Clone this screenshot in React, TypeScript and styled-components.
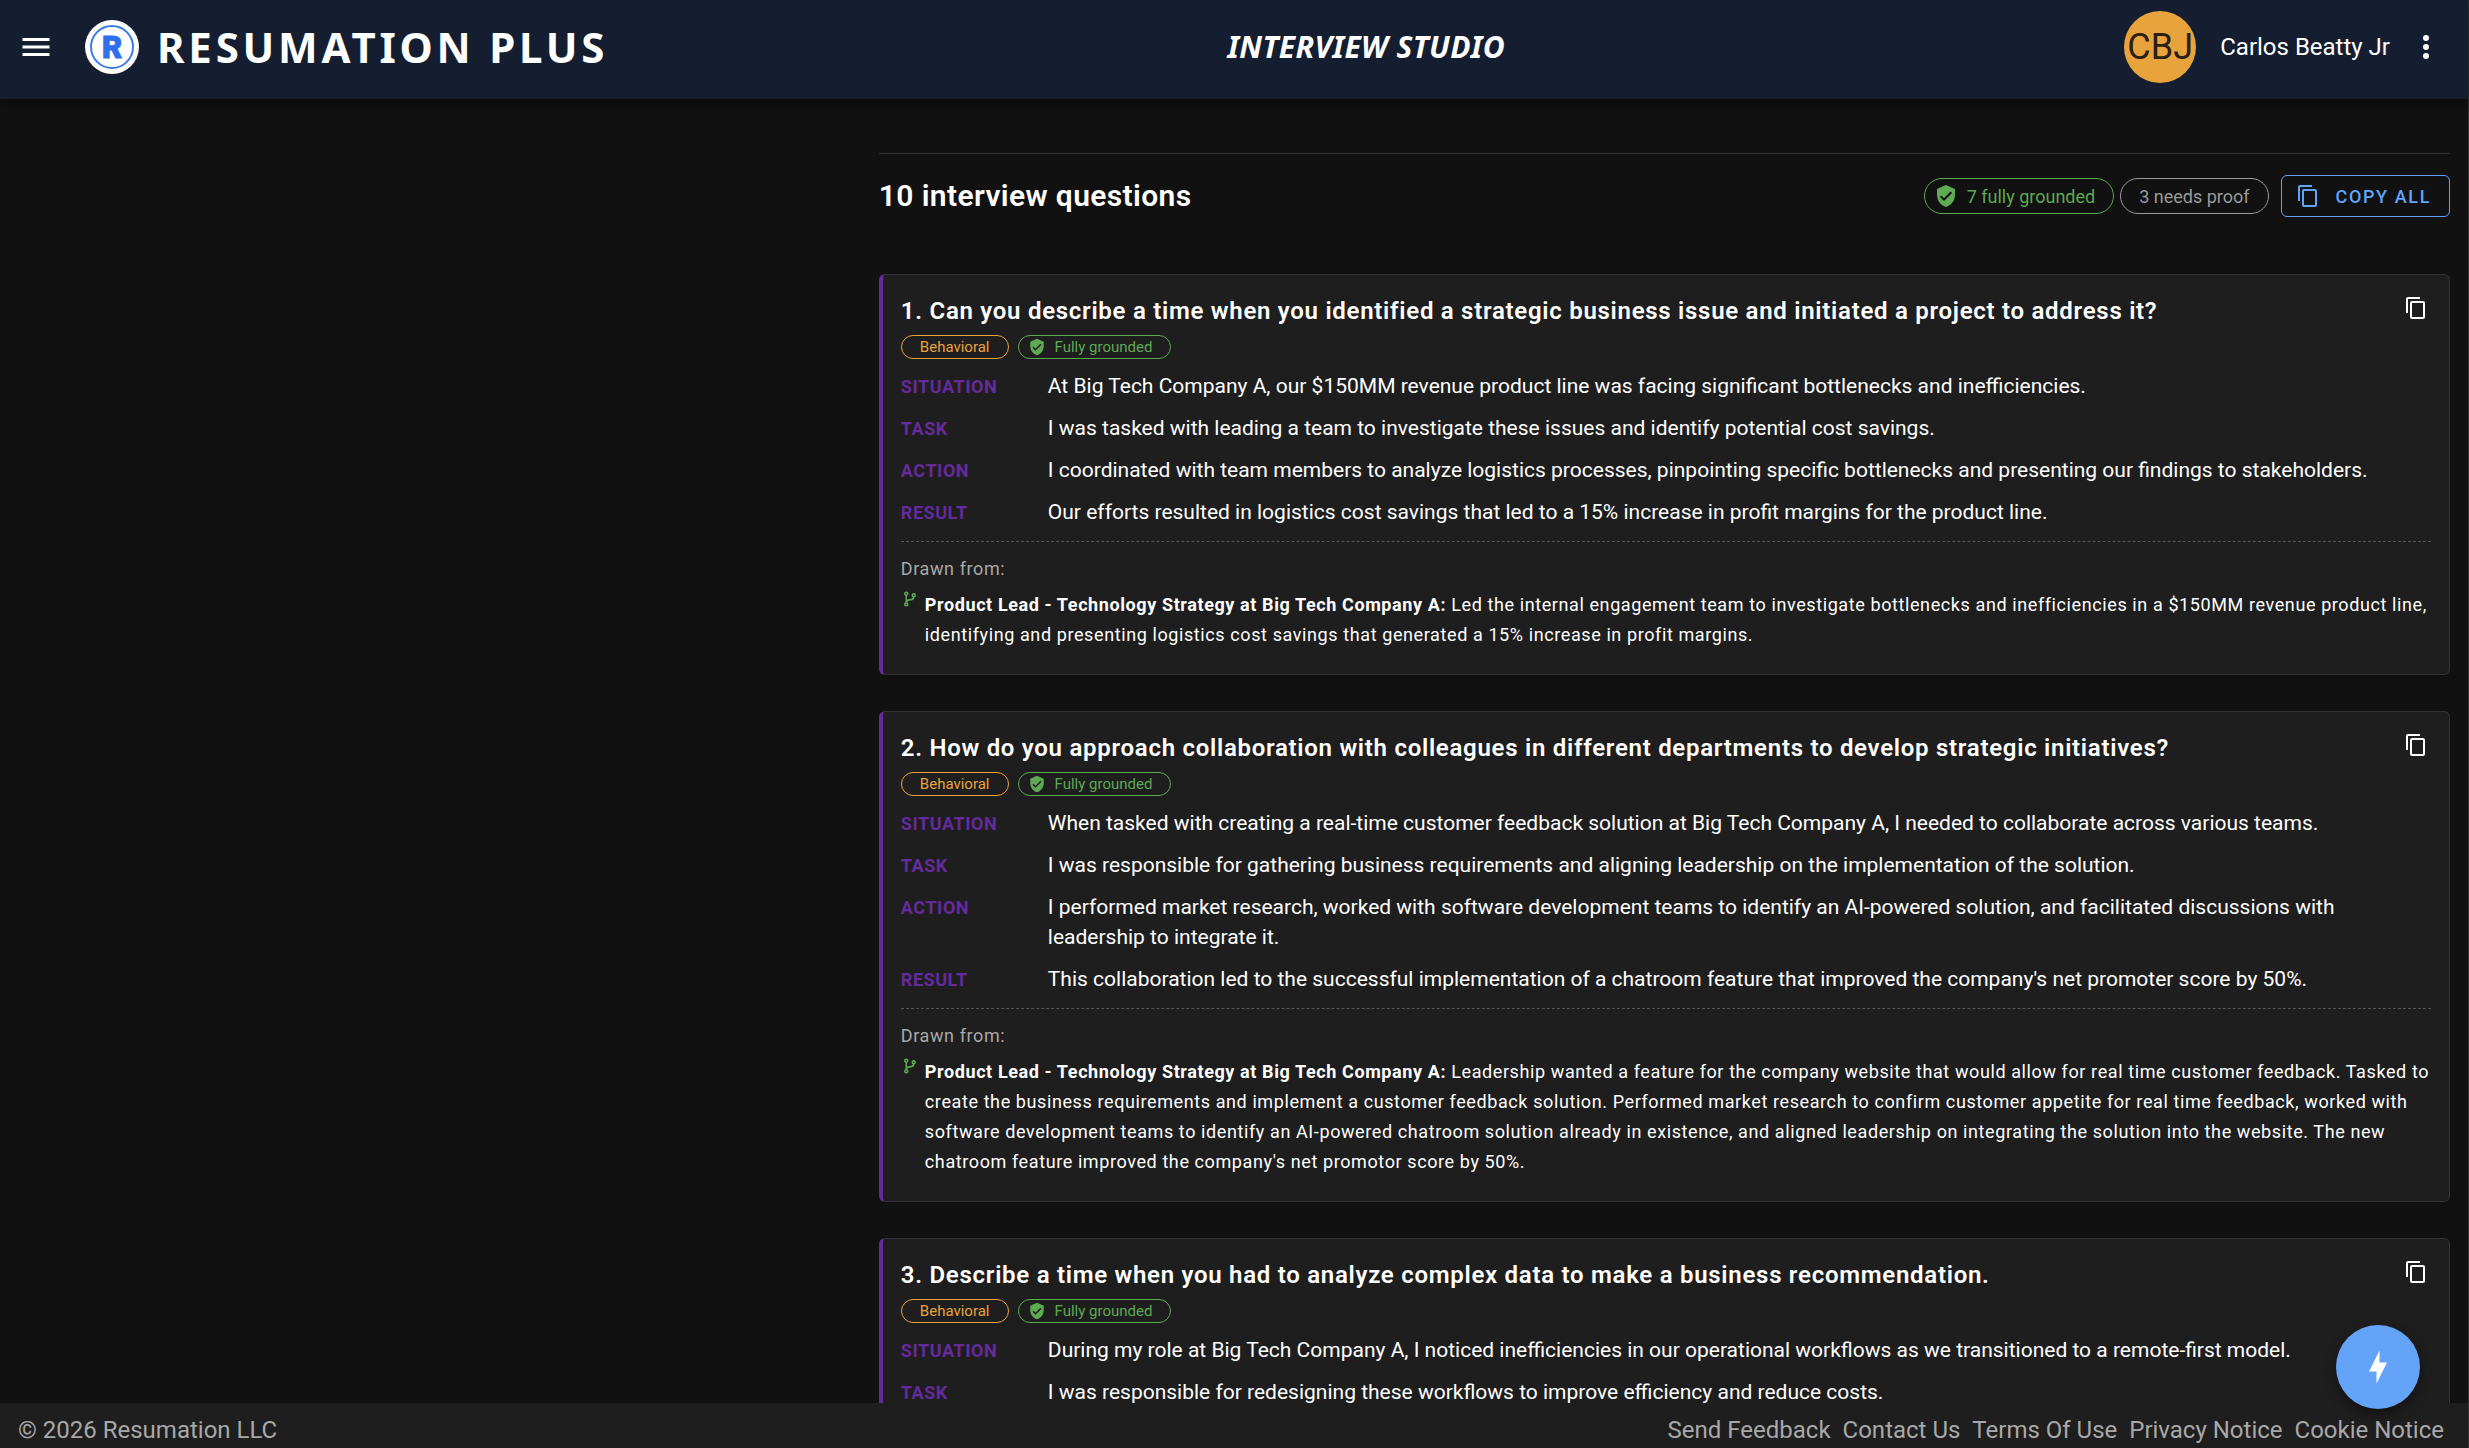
import React from 'react';
import styled, { createGlobalStyle } from 'styled-components';

const color = {
  page: '#111111',
  surface: '#1e1e1e',
  header: '#141e30',
  line: '#333333',
  purple: '#652a9c',
  green: '#5fa854',
  amber: '#e8a33d',
  blue: '#60a5fa',
  muted: '#a8a8a8',
};

const GlobalStyle = createGlobalStyle`
  *, *::before, *::after { box-sizing: border-box; }
  body {
    margin: 0;
    background: ${color.page};
    color: #fff;
    font-family: Roboto, sans-serif;
    font-size: 24px;
  }
  h1, h2, h3, p, dl, dd, dt, ul { margin: 0; padding: 0; font-weight: inherit; }
  button { font-family: inherit; cursor: pointer; }
`;

const icons = {
  menu: 'M3,6H21V8H3V6M3,11H21V13H3V11M3,16H21V18H3V16Z',
  dots: 'M12,16A2,2 0 0,1 14,18A2,2 0 0,1 12,20A2,2 0 0,1 10,18A2,2 0 0,1 12,16M12,10A2,2 0 0,1 14,12A2,2 0 0,1 12,14A2,2 0 0,1 10,12A2,2 0 0,1 12,10M12,4A2,2 0 0,1 14,6A2,2 0 0,1 12,8A2,2 0 0,1 10,6A2,2 0 0,1 12,4Z',
  copy: 'M19,21H8V7H19M19,5H8A2,2 0 0,0 6,7V21A2,2 0 0,0 8,23H19A2,2 0 0,0 21,21V7A2,2 0 0,0 19,5M16,1H4A2,2 0 0,0 2,3V17H4V3H16V1Z',
  shield: 'M10,17L6,13L7.41,11.59L10,14.17L16.59,7.58L18,9M12,1L3,5V11C3,16.55 6.84,21.74 12,23C17.16,21.74 21,16.55 21,11V5L12,1Z',
  branch: 'M13,14C9.64,14 8.54,15.35 8.18,16.24C9.25,16.7 10,17.76 10,19A3,3 0 0,1 7,22A3,3 0 0,1 4,19C4,17.69 4.83,16.58 6,16.17V7.83C4.83,7.42 4,6.31 4,5A3,3 0 0,1 7,2A3,3 0 0,1 10,5C10,6.31 9.17,7.42 8,7.83V13.12C8.88,12.47 10.16,12 12,12C14.67,12 15.56,10.66 15.85,9.77C14.77,9.32 14,8.25 14,7A3,3 0 0,1 17,4A3,3 0 0,1 20,7C20,8.34 19.12,9.5 17.91,9.86C17.65,11.29 16.68,14 13,14M7,18A1,1 0 0,0 6,19A1,1 0 0,0 7,20A1,1 0 0,0 8,19A1,1 0 0,0 7,18M7,4A1,1 0 0,0 6,5A1,1 0 0,0 7,6A1,1 0 0,0 8,5A1,1 0 0,0 7,4M17,6A1,1 0 0,0 16,7A1,1 0 0,0 17,8A1,1 0 0,0 18,7A1,1 0 0,0 17,6Z',
  bolt: 'M11 15H6L13 1V9H18L11 23V15Z',
};

const IconSvg = styled.svg<{ $size: number }>`
  display: block;
  flex: none;
  width: ${(p) => p.$size}px;
  height: ${(p) => p.$size}px;
  fill: currentColor;
`;

function Icon({ name, size = 24 }: { name: keyof typeof icons; size?: number }) {
  return (
    <IconSvg $size={size} viewBox="0 0 24 24" aria-hidden="true">
      <path d={icons[name]} />
    </IconSvg>
  );
}

const Shell = styled.div`
  display: flex;
  flex-direction: column;
  height: 100vh;
  border-right: 1px solid ${color.line};
`;

const Header = styled.header`
  z-index: 1;
  flex: none;
  display: flex;
  justify-content: space-between;
  align-items: center;
  height: 99px;
  padding: 0 24px 5px 18px;
  background: ${color.header};
  box-shadow: 0 3px 8px rgba(0, 0, 0, 0.5);
`;

const Brand = styled.div`
  display: flex;
  align-items: center;
`;

const BarButton = styled.button`
  display: flex;
  padding: 0;
  border: 0;
  background: none;
  color: #fff;
`;

const Logo = styled.svg`
  flex: none;
  width: 54px;
  height: 54px;
  margin: 0 18px 0 31px;
`;

const BrandName = styled.span`
  font-family: 'Noto Sans', sans-serif;
  font-size: 42px;
  font-weight: 700;
  line-height: 54px;
  letter-spacing: 0.09em;
  white-space: nowrap;
`;

const PageTitle = styled.h1`
  font-family: 'Noto Sans', sans-serif;
  font-size: 30px;
  font-weight: 700;
  font-style: italic;
  line-height: 36px;
  letter-spacing: 0.0125em;
  white-space: nowrap;
`;

const Account = styled.div`
  display: flex;
  align-items: center;
  justify-content: flex-end;
  white-space: nowrap;
`;

const Avatar = styled.span`
  display: flex;
  align-items: center;
  justify-content: center;
  width: 72px;
  height: 72px;
  margin-right: 24px;
  border-radius: 50%;
  background: ${color.amber};
  color: #2a2013;
  font-size: 36px;
`;

const UserName = styled.span`
  margin-right: 18px;
`;

const Main = styled.main`
  flex: 1;
  min-height: 0;
  display: grid;
  grid-template-columns: 21fr 40fr;
  column-gap: 36px;
  padding: 54px 18px 0;
  overflow-y: auto;
  scrollbar-width: none;
`;

const Results = styled.section`
  grid-column: 2;
  border-top: 1px solid ${color.line};
`;

const ResultsBar = styled.div`
  display: flex;
  align-items: center;
  justify-content: space-between;
  padding: 21px 0 57px;
`;

const ResultsTitle = styled.h2`
  font-size: 30px;
  font-weight: 600;
  line-height: 42px;
  letter-spacing: 0.0125em;
`;

const Summary = styled.div`
  display: flex;
  align-items: center;
  gap: 6px;
`;

const Chip = styled.span<{ $tone: string; $small?: boolean }>`
  display: inline-flex;
  align-items: center;
  gap: 9px;
  height: ${(p) => (p.$small ? 24 : 36)}px;
  padding: 0 18px;
  border: 1px solid ${(p) => p.$tone};
  border-radius: 18px;
  color: ${(p) => p.$tone};
  font-size: ${(p) => (p.$small ? 15 : 18)}px;
  white-space: nowrap;

  svg { margin-left: -9px; }
`;

const CopyAll = styled.button`
  display: flex;
  align-items: center;
  gap: 16px;
  height: 42px;
  margin-left: 6px;
  padding: 0 18px 0 14px;
  border: 1px solid ${color.blue};
  border-radius: 6px;
  background: none;
  color: ${color.blue};
  font-size: 18px;
  font-weight: 500;
  letter-spacing: 0.09em;
`;

const CardList = styled.div`
  display: flex;
  flex-direction: column;
  gap: 36px;
`;

const Card = styled.article`
  padding: 18px;
  border: 1px solid ${color.line};
  border-left: 4px solid ${color.purple};
  border-radius: 6px;
  background: ${color.surface};
`;

const CardHead = styled.div`
  display: flex;
  align-items: flex-start;
  justify-content: space-between;
`;

const Question = styled.h3`
  font-size: 24px;
  font-weight: 600;
  line-height: 36px;
  letter-spacing: 0.03em;
`;

const CopyButton = styled(BarButton)`
  justify-content: center;
  align-items: center;
  width: 30px;
  height: 30px;
`;

const Tags = styled.div`
  display: flex;
  gap: 9px;
  margin: 6px 0 12px;
`;

const Star = styled.dl`
  display: flex;
  flex-direction: column;
  gap: 12px;
`;

const StarRow = styled.div`
  display: grid;
  grid-template-columns: 135px 1fr;
  column-gap: 12px;
  align-items: baseline;
`;

const StarLabel = styled.dt`
  color: ${color.purple};
  font-size: 18px;
  font-weight: 700;
  line-height: 24px;
  letter-spacing: 0.03em;
`;

const StarText = styled.dd`
  font-size: 21px;
  line-height: 30px;
`;

const Sources = styled.div`
  margin-top: 14px;
  padding: 12px 0 6px;
  border-top: 1px dashed #555;
  font-size: 18px;
  line-height: 30px;
  letter-spacing: 0.0333em;
`;

const SourcesLabel = styled.p`
  color: ${color.muted};
`;

const Source = styled.div`
  display: flex;
  gap: 6px;
  margin-top: 6px;
  color: ${color.green};

  p { color: #fff; }
`;

const Fab = styled.button`
  position: fixed;
  right: 49px;
  bottom: 39px;
  z-index: 2;
  display: flex;
  align-items: center;
  justify-content: center;
  width: 84px;
  height: 84px;
  padding: 0;
  border: 0;
  border-radius: 50%;
  background: #64a4f8;
  color: #fff;
  box-shadow: 0 5px 12px rgba(0, 0, 0, 0.4);
`;

const Footer = styled.footer`
  flex: none;
  display: flex;
  justify-content: space-between;
  height: 45px;
  padding: 9px 24px 0 18px;
  background: ${color.surface};
  color: ${color.muted};
  line-height: 36px;
  white-space: nowrap;
`;

const FooterNav = styled.nav`
  display: flex;
  gap: 12px;

  a { color: inherit; text-decoration: none; }
`;

interface Answer {
  question: string;
  star: [string, string][];
  role?: string;
  evidence?: string;
}

const answers: Answer[] = [
  {
    question: 'Can you describe a time when you identified a strategic business issue and initiated a project to address it?',
    star: [
      ['SITUATION', 'At Big Tech Company A, our $150MM revenue product line was facing significant bottlenecks and inefficiencies.'],
      ['TASK', 'I was tasked with leading a team to investigate these issues and identify potential cost savings.'],
      ['ACTION', 'I coordinated with team members to analyze logistics processes, pinpointing specific bottlenecks and presenting our findings to stakeholders.'],
      ['RESULT', 'Our efforts resulted in logistics cost savings that led to a 15% increase in profit margins for the product line.'],
    ],
    role: 'Product Lead - Technology Strategy at Big Tech Company A:',
    evidence:
      'Led the internal engagement team to investigate bottlenecks and inefficiencies in a $150MM revenue product line, identifying and presenting logistics cost savings that generated a 15% increase in profit margins.',
  },
  {
    question: 'How do you approach collaboration with colleagues in different departments to develop strategic initiatives?',
    star: [
      ['SITUATION', 'When tasked with creating a real-time customer feedback solution at Big Tech Company A, I needed to collaborate across various teams.'],
      ['TASK', 'I was responsible for gathering business requirements and aligning leadership on the implementation of the solution.'],
      ['ACTION', 'I performed market research, worked with software development teams to identify an AI-powered solution, and facilitated discussions with leadership to integrate it.'],
      ['RESULT', "This collaboration led to the successful implementation of a chatroom feature that improved the company's net promoter score by 50%."],
    ],
    role: 'Product Lead - Technology Strategy at Big Tech Company A:',
    evidence:
      "Leadership wanted a feature for the company website that would allow for real time customer feedback. Tasked to create the business requirements and implement a customer feedback solution. Performed market research to confirm customer appetite for real time feedback, worked with software development teams to identify an AI-powered chatroom solution already in existence, and aligned leadership on integrating the solution into the website. The new chatroom feature improved the company's net promotor score by 50%.",
  },
  {
    question: 'Describe a time when you had to analyze complex data to make a business recommendation.',
    star: [
      ['SITUATION', 'During my role at Big Tech Company A, I noticed inefficiencies in our operational workflows as we transitioned to a remote-first model.'],
      ['TASK', 'I was responsible for redesigning these workflows to improve efficiency and reduce costs.'],
    ],
  },
];

const footerLinks = ['Send Feedback', 'Contact Us', 'Terms Of Use', 'Privacy Notice', 'Cookie Notice'];

function QuestionCard({ answer, number }: { answer: Answer; number: number }) {
  return (
    <Card>
      <CardHead>
        <Question>{`${number}. ${answer.question}`}</Question>
        <CopyButton type="button" aria-label="Copy answer">
          <Icon name="copy" />
        </CopyButton>
      </CardHead>
      <Tags>
        <Chip $small $tone={color.amber}>Behavioral</Chip>
        <Chip $small $tone={color.green}>
          <Icon name="shield" size={18} />
          Fully grounded
        </Chip>
      </Tags>
      <Star>
        {answer.star.map(([label, text]) => (
          <StarRow key={label}>
            <StarLabel>{label}</StarLabel>
            <StarText>{text}</StarText>
          </StarRow>
        ))}
      </Star>
      {answer.role && (
        <Sources>
          <SourcesLabel>Drawn from:</SourcesLabel>
          <Source>
            <Icon name="branch" size={18} />
            <p>
              <strong>{answer.role}</strong> {answer.evidence}
            </p>
          </Source>
        </Sources>
      )}
    </Card>
  );
}

export default function App() {
  return (
    <>
      <GlobalStyle />
      <Shell>
        <Header>
          <Brand>
            <BarButton type="button" aria-label="Menu">
              <Icon name="menu" size={36} />
            </BarButton>
            <Logo viewBox="0 0 54 54" aria-hidden="true">
              <circle cx="27" cy="27" r="27" fill="#fff" />
              <circle cx="27" cy="27" r="21" fill="none" stroke="#3b7be8" strokeWidth="2" />
              <text x="27" y="38" textAnchor="middle" fontFamily="Roboto" fontWeight="900" fontSize="31" fill="#2f6fed" stroke="#2f6fed" strokeWidth="1">R</text>
            </Logo>
            <BrandName>RESUMATION PLUS</BrandName>
          </Brand>
          <PageTitle>INTERVIEW STUDIO</PageTitle>
          <Account>
            <Avatar>CBJ</Avatar>
            <UserName>Carlos Beatty Jr</UserName>
            <BarButton type="button" aria-label="More options">
              <Icon name="dots" size={36} />
            </BarButton>
          </Account>
        </Header>
        <Main>
          <Results>
            <ResultsBar>
              <ResultsTitle>10 interview questions</ResultsTitle>
              <Summary>
                <Chip $tone={color.green}>
                  <Icon name="shield" />
                  7 fully grounded
                </Chip>
                <Chip $tone="#9a9a9a">3 needs proof</Chip>
                <CopyAll type="button">
                  <Icon name="copy" />
                  COPY ALL
                </CopyAll>
              </Summary>
            </ResultsBar>
            <CardList>
              {answers.map((answer, index) => (
                <QuestionCard key={answer.question} answer={answer} number={index + 1} />
              ))}
            </CardList>
          </Results>
        </Main>
        <Footer>
          <span>© 2026 Resumation LLC</span>
          <FooterNav aria-label="Footer">
            {footerLinks.map((link) => (
              <a key={link} href="#">{link}</a>
            ))}
          </FooterNav>
        </Footer>
      </Shell>
      <Fab type="button" aria-label="Quick actions">
        <Icon name="bolt" size={36} />
      </Fab>
    </>
  );
}
